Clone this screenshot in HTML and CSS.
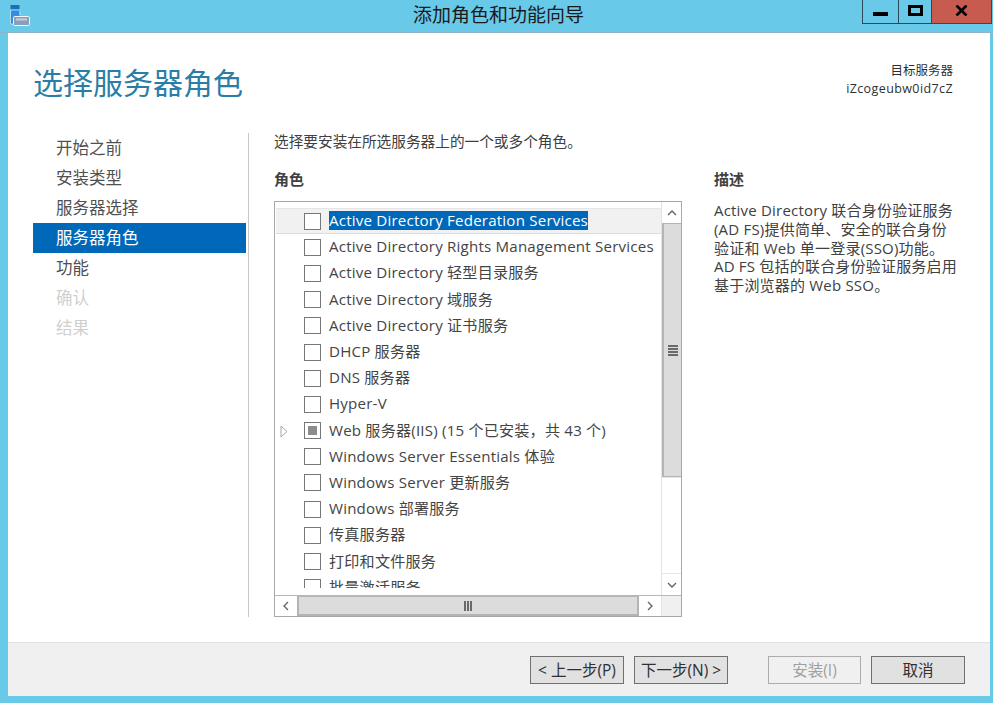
FILE: index.html
```html
<!DOCTYPE html>
<html lang="zh-CN">
<head>
<meta charset="utf-8">
<title>添加角色和功能向导</title>
<link rel="stylesheet" href="styles.css">
</head>
<body>
<div class="titlebar">
  <div class="app-icon">
    <svg width="21" height="21" viewBox="0 0 21 21"><rect x="0.5" y="0" width="9" height="4.5" fill="#1f6fb8"/><rect x="0.5" y="5" width="9" height="14" fill="#2f8fe0"/><path d="M10 10 V6 M0.5 5 H10 M.5 5 V19 H4" stroke="#d8eef8" stroke-width=".7" fill="none"/><rect x="6" y="11" width="4" height="2" fill="#8c9fb8"/><rect x="3.5" y="11.5" width="16" height="9" rx="1" fill="#8c9fb8" stroke="#eef6fb"/><rect x="6" y="13.5" width="11" height="2" fill="#c4ceda"/></svg>
  </div>
  <div class="title">添加角色和功能向导</div>
  <div class="caption">
    <div class="cap-btn cap-min"><span class="min-glyph"></span></div>
    <div class="cap-btn cap-max"><span class="max-glyph"></span></div>
    <div class="cap-btn cap-close">
      <svg width="13" height="11" viewBox="0 0 13 11"><path d="M1.5 .5 L11.5 10.5 M11.5 .5 L1.5 10.5" stroke="#000" stroke-width="2.6" fill="none"/></svg>
    </div>
  </div>
</div>

<div class="window">
  <header class="header">
    <h1 class="page-title">选择服务器角色</h1>
    <div class="target">
      <div>目标服务器</div>
      <div class="target-name">iZcogeubw0id7cZ</div>
    </div>
  </header>

  <div class="content">
    <nav class="nav">
      <div class="nav-item">开始之前</div>
      <div class="nav-item">安装类型</div>
      <div class="nav-item">服务器选择</div>
      <div class="nav-item selected">服务器角色</div>
      <div class="nav-item">功能</div>
      <div class="nav-item disabled">确认</div>
      <div class="nav-item disabled">结果</div>
    </nav>

    <main class="main">
      <p class="intro">选择要安装在所选服务器上的一个或多个角色。</p>
      <div class="columns">
        <section class="roles">
          <h2 class="label">角色</h2>
          <div class="listbox">
            <div class="list-top">
              <div class="list-pane">
                <div class="list-view">
                  <div class="row hot"><span class="check"></span><span class="text sel">Active Directory Federation Services</span></div>
                  <div class="row"><span class="check"></span><span class="text">Active Directory Rights Management Services</span></div>
                  <div class="row"><span class="check"></span><span class="text">Active Directory 轻型目录服务</span></div>
                  <div class="row"><span class="check"></span><span class="text">Active Directory 域服务</span></div>
                  <div class="row"><span class="check"></span><span class="text">Active Directory 证书服务</span></div>
                  <div class="row"><span class="check"></span><span class="text">DHCP 服务器</span></div>
                  <div class="row"><span class="check"></span><span class="text">DNS 服务器</span></div>
                  <div class="row"><span class="check"></span><span class="text">Hyper-V</span></div>
                  <div class="row">
                    <svg class="expander" width="8" height="13" viewBox="0 0 8 13"><path d="M1 1 L7 6.5 L1 12 Z" fill="#fff" stroke="#a6a6a6"/></svg>
                    <span class="check partial"></span><span class="text">Web 服务器(IIS) (15 个已安装，共 43 个)</span>
                  </div>
                  <div class="row"><span class="check"></span><span class="text">Windows Server Essentials 体验</span></div>
                  <div class="row"><span class="check"></span><span class="text">Windows Server 更新服务</span></div>
                  <div class="row"><span class="check"></span><span class="text">Windows 部署服务</span></div>
                  <div class="row"><span class="check"></span><span class="text">传真服务器</span></div>
                  <div class="row"><span class="check"></span><span class="text">打印和文件服务</span></div>
                  <div class="row"><span class="check"></span><span class="text">批量激活服务</span></div>
                </div>
              </div>
              <div class="vscroll">
                <div class="sb-btn v">
                  <svg width="10" height="6" viewBox="0 0 10 6"><path d="M1 5 L5 1 L9 5" fill="none" stroke="#606060" stroke-width="1.3"/></svg>
                </div>
                <div class="v-thumb"><span class="grip-h"></span><span class="grip-h"></span><span class="grip-h"></span><span class="grip-h"></span></div>
                <div class="v-track"></div>
                <div class="sb-btn v">
                  <svg width="10" height="6" viewBox="0 0 10 6"><path d="M1 1 L5 5 L9 1" fill="none" stroke="#606060" stroke-width="1.3"/></svg>
                </div>
              </div>
            </div>
            <div class="hscroll">
              <div class="sb-btn h">
                <svg width="6" height="10" viewBox="0 0 6 10"><path d="M5 1 L1 5 L5 9" fill="none" stroke="#606060" stroke-width="1.3"/></svg>
              </div>
              <div class="h-thumb"><span class="grip-v"></span><span class="grip-v"></span><span class="grip-v"></span></div>
              <div class="sb-btn h">
                <svg width="6" height="10" viewBox="0 0 6 10"><path d="M1 1 L5 5 L1 9" fill="none" stroke="#606060" stroke-width="1.3"/></svg>
              </div>
              <div class="corner"></div>
            </div>
          </div>
        </section>
        <section class="desc">
          <h2 class="label">描述</h2>
          <p class="desc-text">Active Directory 联合身份验证服务<br>(AD FS)提供简单、安全的联合身份<br>验证和 Web 单一登录(SSO)功能。<br>AD FS 包括的联合身份验证服务启用<br>基于浏览器的 Web SSO。</p>
        </section>
      </div>
    </main>
  </div>

  <footer class="footer">
    <button class="btn">&lt; 上一步(P)</button>
    <button class="btn next">下一步(N) &gt;</button>
    <button class="btn off install">安装(I)</button>
    <button class="btn cancel">取消</button>
  </footer>
</div>
</body>
</html>
```
FILE: styles.css
```css
* { box-sizing: border-box; }
html, body { margin: 0; padding: 0; }
body {
  width: 993px;
  height: 703px;
  overflow: hidden;
  background: #69c9e9;
  font-family: "Open Sans", "Noto Sans CJK SC", sans-serif;
  color: #404040;
  display: flex;
  flex-direction: column;
}
.titlebar {
  height: 33px;
  flex: none;
  display: grid;
  grid-template-columns: 1fr auto 1fr;
  border-bottom: 1px solid #8fb2c4;
}
.app-icon { padding: 5px 0 0 10px; height: 27px; }
.app-icon svg { display: block; }
.title {
  font-size: 19px;
  line-height: 31px;
  color: #1a1a1a;
  padding-left: 4px;
}
.caption {
  justify-self: end;
  display: flex;
  height: 24px;
  margin-right: 1px;
  border: 1px solid #2c4a5c;
  border-top: 0;
  background: #69c9e9;
}
.cap-btn { display: flex; align-items: center; justify-content: center; }
.cap-min { width: 36px; border-right: 1px solid #2c4a5c; }
.cap-max { width: 33px; border-right: 1px solid #2c4a5c; }
.cap-close { width: 59px; background: #c75b50; }
.min-glyph { width: 15px; height: 4px; background: #000; margin-top: 5px; }
.max-glyph { width: 15px; height: 11px; border: 3px solid #000; margin-top: -3px; }
.cap-close svg { margin-top: -3px; }

.window {
  flex: none;
  width: 982px;
  height: 663px;
  margin-left: 8px;
  background: #fff;
  display: flex;
  flex-direction: column;
}
.header {
  height: 100px;
  flex: none;
  display: flex;
  justify-content: space-between;
  padding: 32px 37px 0 25px;
}
.page-title {
  margin: 0;
  font-size: 30px;
  font-weight: 400;
  line-height: 36px;
  color: #2a7da6;
}
.target {
  font-size: 12.5px;
  line-height: 18px;
  margin-top: -3px;
  text-align: right;
  color: #303030;
}
.target-name { letter-spacing: .4px; }
.content { flex: none; height: 484px; display: flex; padding-left: 25px; }
.nav { width: 216px; flex: none; border-right: 1px solid #c8c8c8; padding-right: 2px; }
.nav-item {
  height: 30px;
  line-height: 30px;
  font-size: 16.5px;
  padding-left: 23px;
  color: #505050;
}
.nav-item.selected { background: #0068b8; color: #fff; }
.nav-item.disabled { color: #cfcfcf; }
.main { flex: 1; padding-left: 25px; min-width: 0; }
.intro { margin: -2px 0 0; font-size: 14.67px; line-height: 20px; color: #404040; }
.columns { display: flex; gap: 32px; margin-top: 18px; }
.roles { width: 408px; flex: none; }
.desc { width: 260px; flex: none; }
.label { margin: 0; font-size: 15px; font-weight: 700; line-height: 20px; color: #404040; }
.listbox {
  margin-top: 12px;
  width: 408px;
  height: 416px;
  border: 1px solid #a8a8a8;
  display: flex;
  flex-direction: column;
  background: #fff;
}
.list-top { flex: 1; display: flex; min-height: 0; }
.list-pane { flex: 1; min-width: 0; background: #fff; }
.list-view {
  height: 386px;
  overflow: hidden;
  padding-top: 6px;
}
.row {
  height: 26.2px;
  display: flex;
  align-items: center;
  padding-left: 29px;
  position: relative;
  white-space: nowrap;
  font-size: 15.1px;
  letter-spacing: .2px;
  color: #444;
}
.row.hot { background: #f1f1f1; border-top: 1px solid #e6e6e6; border-bottom: 1px solid #dcdcdc; margin: 0 0 0 1px; padding-left: 28px; }
.check {
  width: 17px;
  height: 17px;
  flex: none;
  border: 1px solid #777;
  background: #fff;
  margin-right: 8px;
  display: flex;
}
.check.partial { padding: 3px; }
.check.partial::before { content: ""; flex: 1; background: #8c8c8c; }
.text { line-height: 19px; margin-top: -1px; }
.text.sel { background: #0068b8; color: #fff; }
.expander { position: absolute; left: 5px; top: 7px; }
.vscroll { width: 20px; flex: none; display: flex; flex-direction: column; border-left: 1px solid #e2e2e2; }
.sb-btn { display: flex; align-items: center; justify-content: center; background: #fff; flex: none; }
.sb-btn.v { height: 21px; }
.sb-btn.h { width: 22px; height: 20px; }
.v-thumb {
  height: 254px;
  flex: none;
  background: #dcdcdc;
  border: 2px solid #b4b4b4;
  border-top-width: 1px;
  border-bottom-width: 1px;
  border-right: 0;
  display: flex;
  flex-direction: column;
  align-items: center;
  justify-content: center;
  gap: 1px;
}
.v-track { flex: 1; background: #fff; border-top: 1px solid #e6e6e6; border-bottom: 1px solid #e6e6e6; }
.grip-h { width: 10px; height: 2px; background: #6a6a6a; }
.hscroll { height: 21px; flex: none; display: flex; border-top: 1px solid #b8b8b8; }
.h-thumb {
  width: 342px;
  flex: none;
  background: #dcdcdc;
  border: 2px solid #b4b4b4;
  border-top-width: 1px;
  border-bottom-width: 2px;
  display: flex;
  align-items: center;
  justify-content: center;
  gap: 1px;
}
.grip-v { width: 2px; height: 10px; background: #6a6a6a; }
.corner { flex: 1; background: #f0f0f0; border-left: 1px solid #e2e2e2; }
.desc-text { margin: 12px 0 0; font-size: 15px; letter-spacing: .2px; line-height: 18.8px; color: #404040; white-space: nowrap; }

.footer {
  flex: none;
  height: 54px;
  margin-top: 25px;
  background: #f0f0f0;
  border-top: 1px solid #e2e2e2;
  display: flex;
  align-items: flex-start;
  padding: 13px 0 0 522px;
}
.btn {
  width: 94px;
  height: 28px;
  padding: 0;
  font-family: inherit;
  font-size: 15.5px;
  line-height: 24px;
  color: #303030;
  background: #e1e1e1;
  border: 1px solid #707070;
  border-radius: 0;
}
.btn.next { margin-left: 10px; }
.btn.off { background: #f0f0f0; border-color: #adadad; color: #a0a0a0; }
.btn.install { margin-left: 40px; width: 93px; }
.btn.cancel { margin-left: 10px; }
```
